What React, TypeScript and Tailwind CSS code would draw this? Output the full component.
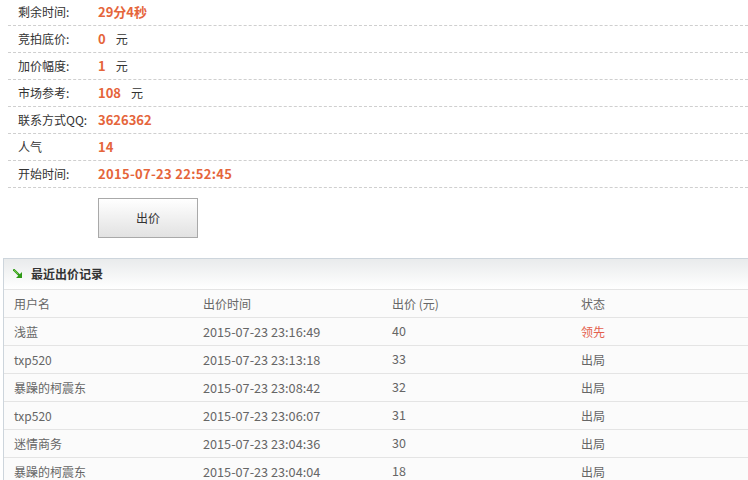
import React from 'react';

const font = { fontFamily: '"Noto Sans CJK SC", "Noto Sans", sans-serif' };

const infoRows: { label: string; value: string; unit?: string; wide?: boolean }[] = [
  { label: '剩余时间:', value: '29分4秒' },
  { label: '竞拍底价:', value: '0', unit: '元' },
  { label: '加价幅度:', value: '1', unit: '元' },
  { label: '市场参考:', value: '108', unit: '元' },
  { label: '联系方式QQ:', value: '3626362' },
  { label: '人气', value: '14' },
  { label: '开始时间:', value: '2015-07-23 22:52:45', wide: true },
];

const bids = [
  { user: '浅蓝', time: '2015-07-23 23:16:49', price: '40', status: '领先', lead: true },
  { user: 'txp520', time: '2015-07-23 23:13:18', price: '33', status: '出局' },
  { user: '暴躁的柯震东', time: '2015-07-23 23:08:42', price: '32', status: '出局' },
  { user: 'txp520', time: '2015-07-23 23:06:07', price: '31', status: '出局' },
  { user: '迷情商务', time: '2015-07-23 23:04:36', price: '30', status: '出局' },
  { user: '暴躁的柯震东', time: '2015-07-23 23:04:04', price: '18', status: '出局' },
];

const ArrowIcon = () => (
  <svg width="10" height="10" viewBox="0 0 10 10" className="shrink-0">
    <path d="M1 1 L7 7" stroke="#2f9a17" strokeWidth="2.2" strokeLinecap="square" />
    <path d="M9 3 L9 9 L3 9 Z" fill="#2f9a17" />
    <path d="M1 1 L5 5" stroke="#7fd24a" strokeWidth="0.8" />
  </svg>
);

export default function App() {
  return (
    <div className="w-[748px] h-[480px] overflow-hidden bg-white" style={font}>
      <div className="pl-2 -mt-[1px]">
        {infoRows.map((r) => (
          <div
            key={r.label}
            className="h-[27px] flex items-center border-b border-dashed border-[#cfcfcf] text-[12px]"
          >
            <span className="w-[90px] pl-[10px] text-[#333]">{r.label}</span>
            <span
              className={`font-bold text-[13px] text-[#e5653b] ${r.wide ? 'tracking-[0.3px]' : ''}`}
            >
              {r.value}
            </span>
            {r.unit && <span className="ml-[10px] text-[#333] text-[12px]">{r.unit}</span>}
          </div>
        ))}
      </div>

      <div className="pl-[98px] mt-[10px]">
        <button className="w-[100px] h-[40px] border border-[#a9a9a9] bg-gradient-to-b from-white to-[#e2e2e2] text-[12px] text-[#333]">
          出价
        </button>
      </div>

      <div className="mt-[20px] ml-[3px] w-[760px] border-t border-l border-[#cdd5dc] bg-[#fbfbfb]">
        <div className="h-[31px] flex items-center gap-[8px] pl-[9px] bg-gradient-to-b from-[#e9ebec] to-white border-b border-[#e4e4e4]">
          <ArrowIcon />
          <span className="text-[12px] font-bold text-[#333]">最近出价记录</span>
        </div>
        <div className="h-[28px] flex items-center border-b border-[#e4e4e4] text-[12px] text-[#666]">
          <span className="w-[189px] pl-[10px]">用户名</span>
          <span className="w-[189px] pl-[10px]">出价时间</span>
          <span className="w-[189px] pl-[10px]">出价 (元)</span>
          <span className="w-[189px] pl-[10px]">状态</span>
        </div>
        {bids.map((b, i) => (
          <div
            key={i}
            className="h-[28px] flex items-center border-b border-[#e4e4e4] text-[12px] text-[#666]"
          >
            <span className="w-[189px] pl-[10px]">{b.user}</span>
            <span className="w-[189px] pl-[10px] text-[12.7px]">{b.time}</span>
            <span className="w-[189px] pl-[10px] text-[12.5px]">{b.price}</span>
            <span className={`w-[189px] pl-[10px] ${b.lead ? 'text-[#e4604d]' : ''}`}>{b.status}</span>
          </div>
        ))}
      </div>
    </div>
  );
}
